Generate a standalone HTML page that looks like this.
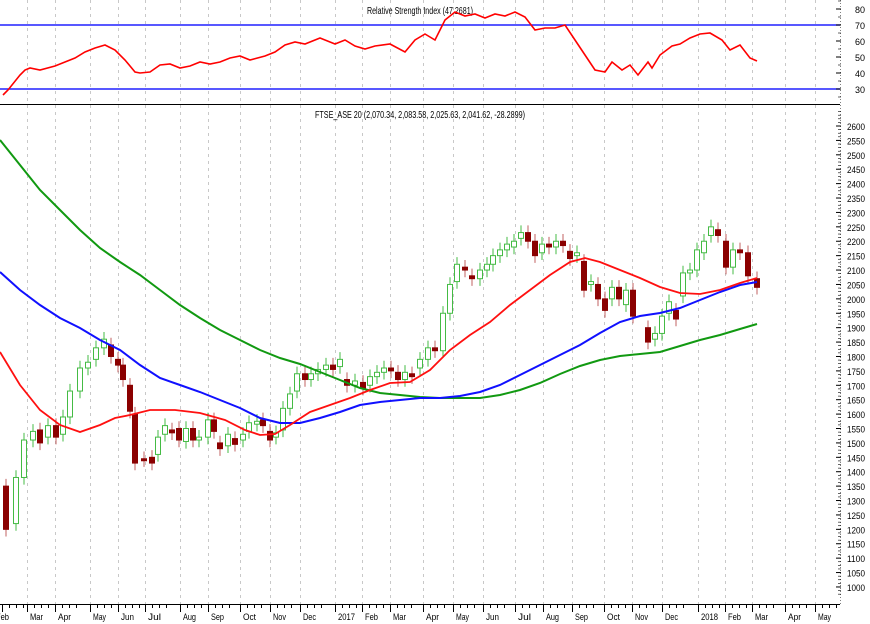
<!DOCTYPE html>
<html><head><meta charset="utf-8"><style>
html,body{margin:0;padding:0;background:#fff;width:870px;height:624px;overflow:hidden}
svg{display:block;font-family:"Liberation Sans",sans-serif}
</style></head><body>
<svg id="s" width="870" height="624" xmlns="http://www.w3.org/2000/svg">
<g id="grid" stroke="#c8c8c8" stroke-dasharray="3,4" stroke-width="1"></g>
<line x1="0" y1="25" x2="840" y2="25" stroke="#2020ff" stroke-width="1.5"/>
<line x1="0" y1="89" x2="840" y2="89" stroke="#2020ff" stroke-width="1.5"/>
<line x1="0" y1="104.5" x2="840" y2="104.5" stroke="#000" stroke-width="1"/>
<line x1="0" y1="604.5" x2="840" y2="604.5" stroke="#000" stroke-width="1"/>
<line x1="840.5" y1="0" x2="840.5" y2="604" stroke="#000" stroke-width="0.5" stroke-dasharray="1,2"/>
<text x="420" y="14" font-size="10" text-anchor="middle" textLength="106" lengthAdjust="spacingAndGlyphs">Relative Strength Index (47.2681)</text>
<text x="420" y="118" font-size="10" text-anchor="middle" textLength="210" lengthAdjust="spacingAndGlyphs">FTSE_ASE 20 (2,070.34, 2,083.58, 2,025.63, 2,041.62, -28.2899)</text>
<g id="axis" font-size="10" fill="#000"></g>
<g id="candles"></g>
<polyline id="rsi" fill="none" stroke="#ff0000" stroke-width="1.6"/>
<polyline id="g" fill="none" stroke="#119911" stroke-width="2"/>
<polyline id="b" fill="none" stroke="#1010ff" stroke-width="2"/>
<polyline id="r" fill="none" stroke="#ff1010" stroke-width="1.8"/>
</svg>
<script>
var NS="http://www.w3.org/2000/svg",S=document.getElementById('s');
function el(p,t,a,txt){var e=document.createElementNS(NS,t);for(var k in a)e.setAttribute(k,a[k]);if(txt)e.textContent=txt;p.appendChild(e);return e;}
function Y(p){return 126+(2600-p)*0.2881;}
var grid=document.getElementById('grid'),ax=document.getElementById('axis');
var months=[[2,"Feb"],[27,"Mar"],[55,"Apr"],[90,"May"],[118,"Jun"],[145,"Jul"],[180,"Aug"],[208,"Sep"],[240,"Oct"],[270,"Nov"],[300,"Dec"],[335,"2017"],[362,"Feb"],[390,"Mar"],[423,"Apr"],[453,"May"],[483,"Jun"],[515,"Jul"],[543,"Aug"],[572,"Sep"],[604,"Oct"],[632,"Nov"],[662,"Dec"],[698,"2018"],[725,"Feb"],[752,"Mar"],[785,"Apr"],[815,"May"]];
months.forEach(function(m,i){var x=m[0]+0.5;
 if(i>0){el(grid,'line',{x1:x,y1:0,x2:x,y2:604});}
 el(ax,'line',{x1:x,y1:604,x2:x,y2:612,stroke:'#000'});
 var t=el(ax,'text',{x:(i==0?-4:m[0]+3),y:620,'font-size':'9.5'},m[1]);
 t.setAttribute('textLength',m[1].length==4?17:13);t.setAttribute('lengthAdjust','spacingAndGlyphs');
 for(var j=1;j<4;j++){var xx=x+j*7;el(ax,'line',{x1:xx,y1:604,x2:xx,y2:608,stroke:'#000'});}
});
for(var p=1000;p<=2600;p+=50){var y=Y(p);var t=el(ax,'text',{x:847,y:y+4,'font-size':'9.5',textLength:(p>=1000?18:14),lengthAdjust:'spacingAndGlyphs'},String(p));el(ax,'line',{x1:836,y1:y,x2:841,y2:y,stroke:'#000'});}
for(var p=975;p<=2650;p+=12.5){var y=Y(p);if(y>106&&y<604)el(ax,'line',{x1:838,y1:y,x2:841,y2:y,stroke:'#000','stroke-width':0.6});}
[[80,9],[70,25],[60,41],[50,57],[40,73],[30,89]].forEach(function(v){el(ax,'text',{x:855,y:v[1]+4,'font-size':'9.5',textLength:10,lengthAdjust:'spacingAndGlyphs'},String(v[0]));el(ax,'line',{x1:836,y1:v[1],x2:841,y2:v[1],stroke:'#000'});});
for(var y=1;y<104;y+=8)el(ax,'line',{x1:838,y1:y,x2:841,y2:y,stroke:'#000','stroke-width':0.6});
var C=[[6,1350,1200],[16,1220,1380],[24,1380,1510],[33,1510,1540],[40,1545,1500],[48,1520,1560],[56,1560,1520],[63,1530,1590],[70,1590,1680],[80,1680,1760],[88,1760,1780],[96,1790,1830],[104,1830,1860],[111,1840,1800],[118,1790,1770],[123,1770,1720],[130,1700,1610],[135,1600,1430],[144,1445,1442],[152,1450,1430],[158,1460,1520],[165,1530,1560],[172,1545,1535],[179,1550,1510],[186,1505,1550],[193,1550,1510],[199,1510,1520],[208,1520,1580],[214,1580,1540],[220,1500,1480],[228,1490,1530],[235,1515,1495],[243,1510,1530],[249,1540,1570],[257,1565,1575],[263,1580,1560],[270,1540,1510],[276,1520,1535],[283,1545,1620],[290,1620,1670],[297,1680,1740],[305,1740,1720],[311,1720,1740],[318,1740,1755],[326,1755,1770],[333,1770,1755],[340,1765,1790],[347,1720,1700],[355,1700,1715],[363,1710,1690],[370,1700,1730],[377,1730,1745],[384,1745,1760],[391,1760,1750],[398,1745,1720],[405,1720,1745],[412,1740,1730],[420,1760,1790],[428,1790,1830],[435,1830,1820],[443,1820,1950],[450,1950,2050],[457,2060,2120],[465,2110,2100],[472,2080,2070],[480,2070,2100],[487,2100,2120],[493,2120,2150],[500,2150,2170],[507,2170,2190],[514,2180,2200],[521,2210,2230],[528,2230,2200],[535,2200,2150],[542,2160,2190],[549,2190,2180],[556,2180,2200],[563,2200,2185],[570,2165,2140],[577,2150,2160],[584,2130,2030],[591,2050,2060],[598,2050,2000],[605,2000,1960],[612,2000,2040],[619,2040,2000],[626,1980,2030],[633,2030,1940],[648,1900,1850],[655,1860,1880],[662,1880,1940],[669,1950,1990],[676,1960,1930],[683,2010,2090],[690,2090,2100],[697,2100,2170],[704,2160,2200],[711,2220,2250],[718,2240,2220],[726,2200,2110],[733,2110,2170],[740,2170,2160],[748,2160,2080],[757,2070,2040]];
var cg=document.getElementById('candles');
C.forEach(function(c){var up=c[2]>=c[1],hi=Math.max(c[1],c[2])+25,lo=Math.min(c[1],c[2])-25;
 var col=up?'#44bb44':'#8b0000',wc=up?'#44bb44':'#c06060';
 el(cg,'line',{x1:c[0],y1:Y(hi),x2:c[0],y2:Y(lo),stroke:wc,'stroke-width':1});
 var t=Y(Math.max(c[1],c[2])),h=Math.max(2,Math.abs(Y(c[1])-Y(c[2])));
 el(cg,'rect',{x:c[0]-2.5,y:t,width:5,height:h,fill:up?'#fff':'#8b0000',stroke:col,'stroke-width':1});
});
function pl(id,pts){document.getElementById(id).setAttribute('points',pts.map(function(p){return p.join(',')}).join(' '));}
pl('r',[[0,352],[20,385],[40,410],[60,425],[80,432],[100,425],[115,418],[130,415],[150,410],[175,410],[200,413],[225,420],[245,430],[260,435],[275,434],[290,425],[310,412],[330,405],[350,398],[370,390],[390,383],[410,382],[430,370],[450,350],[470,335],[490,322],[510,305],[530,290],[550,275],[570,262],[585,258],[600,262],[620,270],[640,278],[660,287],[680,293],[700,294],[720,290],[740,283],[757,278]]);
pl('b',[[0,272],[20,290],[40,305],[60,318],[80,328],[100,340],[120,350],[140,365],[160,378],[180,385],[200,392],[220,400],[240,408],[260,418],[280,423],[300,423],[320,418],[340,412],[360,405],[380,402],[400,400],[420,398],[440,398],[460,396],[480,392],[500,385],[520,375],[540,365],[560,355],[580,345],[600,333],[620,322],[640,316],[660,313],[680,308],[700,300],[720,292],[740,285],[757,282]]);
pl('g',[[0,140],[20,165],[40,190],[60,210],[80,230],[100,248],[120,262],[140,275],[160,290],[180,305],[200,318],[220,330],[240,340],[260,350],[280,358],[300,364],[320,372],[340,380],[360,388],[380,393],[400,395],[420,397],[440,398],[460,398],[480,398],[500,395],[520,390],[540,383],[560,374],[580,366],[600,360],[620,356],[640,354],[660,352],[680,346],[700,340],[720,335],[740,329],[757,324]]);
pl('rsi',[[3,95],[8,90],[20,75],[25,70],[30,68],[40,70],[55,66],[65,62],[75,58],[85,52],[95,48],[105,45],[115,50],[125,60],[135,72],[140,73],[150,72],[160,65],[170,64],[180,68],[190,66],[200,62],[210,64],[220,62],[230,58],[240,56],[250,60],[265,56],[275,52],[285,45],[295,42],[305,44],[320,38],[335,44],[345,40],[355,46],[365,49],[375,46],[390,44],[405,52],[415,40],[425,34],[435,40],[445,20],[455,12],[465,16],[475,14],[485,18],[495,14],[505,16],[515,12],[525,17],[535,30],[545,28],[555,28],[565,25],[575,40],[585,55],[595,70],[605,72],[612,62],[622,70],[630,65],[638,75],[648,62],[652,68],[660,55],[672,46],[680,44],[690,38],[700,34],[710,33],[722,40],[730,50],[740,45],[750,58],[757,61]]);
</script>
</body></html>
